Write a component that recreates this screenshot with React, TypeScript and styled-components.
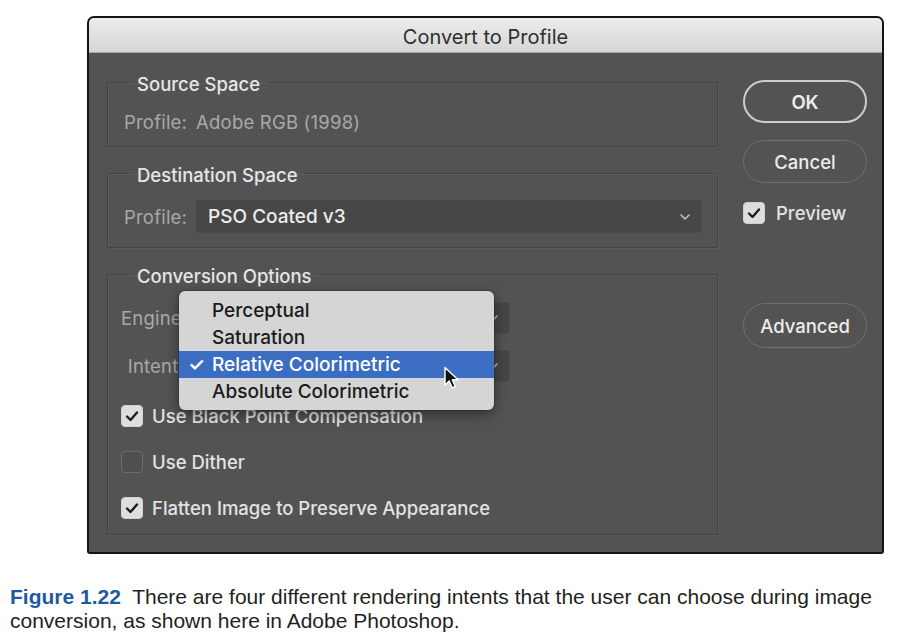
import React from 'react';
import styled, { createGlobalStyle } from 'styled-components';

const GlobalStyle = createGlobalStyle`
    html, body {
        margin: 0;
        padding: 0;
        background: #ffffff;
    }
    body {
        font-family: Inter, 'Noto Sans', sans-serif;
    }
`;

const Chevron = () => (
    <svg width="12" height="8" viewBox="0 0 12 8">
        <polyline
            points="2,2 6,6 10,2"
            fill="none"
            stroke="#c4c4c4"
            strokeWidth="1.6"
            strokeLinecap="round"
            strokeLinejoin="round"
        />
    </svg>
);

const Tick = ({ color }: { color: string }) => (
    <svg width="14" height="12" viewBox="0 0 14 12">
        <polyline
            points="2,6.5 5.5,10 12,2.5"
            fill="none"
            stroke={color}
            strokeWidth="2.4"
            strokeLinecap="round"
            strokeLinejoin="round"
        />
    </svg>
);

const CheckBox = ({ checked }: { checked: boolean }) => (
    <Box $checked={checked}>{checked && <Tick color="#1e1e1e" />}</Box>
);

const intents = [
    'Perceptual',
    'Saturation',
    'Relative Colorimetric',
    'Absolute Colorimetric',
];

export default function App() {
    return (
        <Page>
            <GlobalStyle />
            <Window>
                <TitleBar>Convert to Profile</TitleBar>
                <Body>
                    <LeftColumn>
                        <Group>
                            <Legend>Source Space</Legend>
                            <GroupContent $pt={11} $pb={8} $pl={16}>
                                <Row $h={32}>
                                    <DimLabel>Profile:</DimLabel>
                                    <DimLabel>Adobe RGB (1998)</DimLabel>
                                </Row>
                            </GroupContent>
                        </Group>

                        <Group>
                            <Legend>Destination Space</Legend>
                            <GroupContent $pt={14} $pb={14} $pl={16}>
                                <Row $h={33}>
                                    <DimLabel>Profile:</DimLabel>
                                    <Select $grow>
                                        <span>PSO Coated v3</span>
                                        <Chevron />
                                    </Select>
                                </Row>
                            </GroupContent>
                        </Group>

                        <Group>
                            <Legend>Conversion Options</Legend>
                            <GroupContent $pt={15} $pb={11} $pl={13}>
                                <SelectStack>
                                    <Row $h={32}>
                                        <FieldLabel>Engine:</FieldLabel>
                                        <Select $w={317}>
                                            <span>Adobe (ACE)</span>
                                            <Chevron />
                                        </Select>
                                    </Row>
                                    <Row $h={32}>
                                        <FieldLabel>Intent:</FieldLabel>
                                        <Select $w={317}>
                                            <span>Relative Colorimetric</span>
                                            <Chevron />
                                        </Select>
                                    </Row>

                                    <Menu>
                                        {intents.map((name) => (
                                            <MenuItem
                                                key={name}
                                                $active={name === 'Relative Colorimetric'}
                                            >
                                                <MenuCheck>
                                                    {name === 'Relative Colorimetric'
                                                        ? '✓'
                                                        : ''}
                                                </MenuCheck>
                                                {name}
                                            </MenuItem>
                                        ))}
                                        <Cursor width="20" height="24" viewBox="0 0 20 24">
                                            <path
                                                d="M2 1.5 L2 19 L6.2 15 L9.2 21.8 L12.2 20.5 L9.3 13.8 L15 13.8 Z"
                                                fill="#111"
                                                stroke="#fff"
                                                strokeWidth="1.4"
                                                strokeLinejoin="round"
                                            />
                                        </Cursor>
                                    </Menu>
                                </SelectStack>

                                <Options>
                                    <OptionRow>
                                        <CheckBox checked />
                                        <OptionText>Use Black Point Compensation</OptionText>
                                    </OptionRow>
                                    <OptionRow>
                                        <CheckBox checked={false} />
                                        <OptionText>Use Dither</OptionText>
                                    </OptionRow>
                                    <OptionRow>
                                        <CheckBox checked />
                                        <OptionText>
                                            Flatten Image to Preserve Appearance
                                        </OptionText>
                                    </OptionRow>
                                </Options>
                            </GroupContent>
                        </Group>
                    </LeftColumn>

                    <RightColumn>
                        <PillButton $primary>OK</PillButton>
                        <PillButton $mt={17}>Cancel</PillButton>
                        <PreviewRow>
                            <CheckBox checked />
                            <OptionText>Preview</OptionText>
                        </PreviewRow>
                        <PillButton $mt={79} $h={45}>
                            Advanced
                        </PillButton>
                    </RightColumn>
                </Body>
            </Window>

            <Caption>
                <FigureRef>Figure 1.22</FigureRef>&nbsp; There are four different
                rendering intents that the user can choose during image
                <br />
                conversion, as shown here in Adobe Photoshop.
            </Caption>
        </Page>
    );
}

const Page = styled.div`
    padding: 16px 0 0 0;
    width: 917px;
    height: 635px;
    box-sizing: border-box;
    overflow: hidden;
`;

const Window = styled.div`
    margin-left: 87px;
    width: 797px;
    box-sizing: border-box;
    border: 2px solid #141414;
    border-radius: 7px 7px 3px 3px;
    background: #535353;
    overflow: hidden;
`;

const TitleBar = styled.div`
    height: 35px;
    box-sizing: border-box;
    display: flex;
    align-items: center;
    justify-content: center;
    background: linear-gradient(#ececec, #d6d6d6);
    border-bottom: 1px solid #a9a9a9;
    color: #2e2e2e;
    font-size: 20px;
    padding-top: 3px;
`;

const Body = styled.div`
    display: flex;
    align-items: flex-start;
    gap: 25px;
    padding: 17px 15px 17px 18px;
`;

const LeftColumn = styled.div`
    width: 611px;
    display: flex;
    flex-direction: column;
    gap: 14px;
`;

const Group = styled.fieldset`
    margin: 0;
    padding: 0;
    min-width: 0;
    border: 1px solid #434343;
    box-shadow: 1px 1px 0 #5c5c5c, inset 1px 1px 0 #5c5c5c;
    border-radius: 2px;
`;

const Legend = styled.legend`
    margin-left: 22px;
    padding: 3px 7px 0;
    font-size: 18.5px;
    font-weight: 500;
    line-height: 22px;
    color: #e6e6e6;
`;

const GroupContent = styled.div<{ $pt: number; $pb: number; $pl: number }>`
    padding: ${(p) => p.$pt}px 15px ${(p) => p.$pb}px ${(p) => p.$pl}px;
`;

const Row = styled.div<{ $h: number }>`
    display: flex;
    align-items: center;
    gap: 9px;
    height: ${(p) => p.$h}px;
`;

const DimLabel = styled.span`
    font-size: 18.5px;
    letter-spacing: 0.2px;
    color: #a9a9a9;
    white-space: pre;
`;

const FieldLabel = styled(DimLabel)`
    width: 63px;
    text-align: right;
`;

const Select = styled.div<{ $w?: number; $grow?: boolean }>`
    width: ${(p) => (p.$w ? `${p.$w}px` : 'auto')};
    flex: ${(p) => (p.$grow ? 1 : 'none')};
    height: 100%;
    box-sizing: border-box;
    display: flex;
    align-items: center;
    justify-content: space-between;
    padding: 0 10px 0 11px;
    background: #474747;
    border: 1px solid #4a4a4a;
    border-radius: 3px;
    color: #ececec;
    font-size: 19px;
    font-weight: 500;
`;

const SelectStack = styled.div`
    position: relative;
    display: flex;
    flex-direction: column;
    gap: 16px;
`;

const Menu = styled.div`
    position: absolute;
    left: 58px;
    top: -11px;
    width: 315px;
    box-sizing: border-box;
    padding: 6px 0 5px;
    background: #d5d5d5;
    border-radius: 6px;
    box-shadow: 0 4px 14px rgba(0, 0, 0, 0.45), 0 0 0 1px rgba(0, 0, 0, 0.15);
`;

const MenuItem = styled.div<{ $active?: boolean }>`
    height: 27px;
    display: flex;
    align-items: center;
    font-size: 19px;
    font-weight: 500;
    color: ${(p) => (p.$active ? '#ffffff' : '#1b1b1b')};
    background: ${(p) => (p.$active ? '#3b6dc2' : 'transparent')};
`;

const MenuCheck = styled.span`
    width: 33px;
    padding-left: 9px;
    box-sizing: border-box;
    font-size: 19px;
    font-weight: 600;
`;

const Cursor = styled.svg`
    position: absolute;
    left: 264px;
    top: 75px;
`;

const Options = styled.div`
    display: flex;
    flex-direction: column;
    gap: 16px;
    margin-top: 19px;
`;

const OptionRow = styled.div`
    display: flex;
    align-items: center;
    gap: 9px;
    height: 30px;
`;

const OptionText = styled.span`
    font-size: 18.5px;
    font-weight: 500;
    color: #e2e2e2;
`;

const Box = styled.div<{ $checked: boolean }>`
    width: 22px;
    height: 22px;
    box-sizing: border-box;
    border-radius: 4px;
    display: flex;
    align-items: center;
    justify-content: center;
    background: ${(p) => (p.$checked ? '#dedede' : '#4f4f4f')};
    border: 1px solid ${(p) => (p.$checked ? '#d0d0d0' : '#6c6c6c')};
`;

const RightColumn = styled.div`
    width: 124px;
    display: flex;
    flex-direction: column;
    padding-top: 10px;
`;

const PillButton = styled.div<{ $primary?: boolean; $mt?: number; $h?: number }>`
    height: ${(p) => p.$h ?? 43}px;
    margin-top: ${(p) => p.$mt ?? 0}px;
    box-sizing: border-box;
    display: flex;
    align-items: center;
    justify-content: center;
    border-radius: 23px;
    border: ${(p) => (p.$primary ? '2px solid #cdcdcd' : '1.5px solid #707070')};
    color: #ececec;
    font-size: 18.5px;
    font-weight: ${(p) => (p.$primary ? 600 : 500)};
`;

const PreviewRow = styled.div`
    margin-top: 19px;
    height: 22px;
    display: flex;
    align-items: center;
    gap: 11px;
`;

const Caption = styled.p`
    margin: 31px 0 0 10px;
    font-family: 'Liberation Sans', Arial, sans-serif;
    font-size: 21px;
    line-height: 24px;
    color: #231f20;
`;

const FigureRef = styled.span`
    color: #1f5a9e;
    font-weight: bold;
`;
